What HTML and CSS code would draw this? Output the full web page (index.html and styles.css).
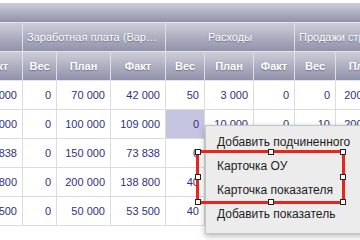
FILE: index.html
```html
<!DOCTYPE html>
<html>
<head>
<meta charset="utf-8">
<link rel="stylesheet" href="styles.css">
</head>
<body>
<div class="viewport">
  <table class="grid">
    <colgroup>
      <col class="w55"><col class="w34"><col class="w54"><col class="w55"><col class="w39"><col class="w49"><col class="w41"><col class="w41"><col class="w54">
    </colgroup>
    <thead>
      <tr class="h-top"><th colspan="9"></th></tr>
      <tr class="h-group">
        <th></th>
        <th colspan="3" class="trunc">Заработная плата (Вариант)</th>
        <th colspan="3">Расходы</th>
        <th colspan="2" class="left">Продажи стр</th>
      </tr>
      <tr class="h-sub">
        <th>Факт</th><th>Вес</th><th>План</th><th>Факт</th><th>Вес</th><th>План</th><th>Факт</th><th>Вес</th><th>План</th>
      </tr>
    </thead>
    <tbody>
      <tr><td>42 000</td><td>0</td><td>70 000</td><td>42 000</td><td>50</td><td>3 000</td><td>0</td><td>0</td><td>200 000</td></tr>
      <tr><td>109 000</td><td>0</td><td>100 000</td><td>109 000</td><td class="sel">0</td><td>10 000</td><td>0</td><td>10</td><td>200 000</td></tr>
      <tr><td>73 838</td><td>0</td><td>150 000</td><td>73 838</td><td>0</td><td>5 000</td><td>0</td><td>0</td><td>150 000</td></tr>
      <tr><td>138 800</td><td>0</td><td>200 000</td><td>138 800</td><td>40</td><td>8 000</td><td>0</td><td>0</td><td>100 000</td></tr>
      <tr><td>53 500</td><td>0</td><td>50 000</td><td>53 500</td><td>40</td><td>2 000</td><td>0</td><td>0</td><td>50 000</td></tr>
    </tbody>
  </table>

  <div class="menu">
    <div class="item">Добавить подчиненного</div>
    <div class="item">Карточка ОУ</div>
    <div class="item">Карточка показателя</div>
    <div class="item">Добавить показатель</div>
  </div>

  <div class="mark">
    <span class="hd tl"></span><span class="hd tm"></span><span class="hd tr"></span>
    <span class="hd ml"></span><span class="hd mr"></span>
    <span class="hd bl"></span><span class="hd bm"></span><span class="hd br"></span>
  </div>
</div>
</body>
</html>
```
FILE: styles.css
```css
html, body {
  margin: 0;
  padding: 0;
  background: #ffffff;
}
.viewport {
  position: relative;
  width: 360px;
  height: 240px;
  overflow: hidden;
  padding-top: 3px;
  box-sizing: border-box;
  background: #ffffff;
  font-family: "Liberation Sans", Arial, sans-serif;
}
.grid {
  table-layout: fixed;
  border-collapse: separate;
  border-spacing: 0;
  width: 422px;
  margin-left: -32px;
}
.w55 { width: 55px; }
.w34 { width: 34px; }
.w54 { width: 54px; }
.w39 { width: 39px; }
.w49 { width: 49px; }
.w41 { width: 41px; }

.grid th {
  color: #ffffff;
  font-size: 11px;
  font-weight: normal;
  text-shadow: 0 1px 1px rgba(70, 70, 100, 0.55);
  background: linear-gradient(#cdcdd9, #9191aa);
  border-right: 1px solid #dedee8;
  border-bottom: 1px solid #e4e4ec;
  padding: 0 4px;
  white-space: nowrap;
  overflow: hidden;
  text-align: center;
}
.h-top th { height: 19px; padding: 0; }
.h-group th { height: 28px; }
.h-group th.trunc { text-overflow: ellipsis; }
.h-group th.left { text-align: left; }
.h-sub th { height: 28px; font-weight: bold; }

.grid td {
  height: 27px;
  padding: 0 5px 1px 0;
  text-align: right;
  font-size: 11px;
  color: #31317e;
  border-right: 1px solid #dcdcdc;
  border-bottom: 1px solid #dcdcdc;
  white-space: nowrap;
  overflow: hidden;
}
.grid td.sel { background: #c5c5e1; }

.menu {
  position: absolute;
  left: 205px;
  top: 125px;
  width: 170px;
  padding: 4px 0 7px;
  background: #ececec;
  border: 1px solid #c4c4c4;
  box-shadow: 0 2px 6px rgba(0, 0, 0, 0.3);
}
.item {
  height: 24px;
  line-height: 24px;
  padding-left: 11px;
  font-size: 12px;
  color: #1c1c1c;
  white-space: nowrap;
}

.mark {
  position: absolute;
  left: 196px;
  top: 150px;
  width: 143px;
  height: 48px;
  border: 3px solid #e8241b;
}
.hd {
  position: absolute;
  width: 4px;
  height: 4px;
  background: #ffffff;
  border: 1px solid #222222;
}
.tl { left: -4px; top: -4px; }
.tm { left: 69px; top: -4px; }
.tr { right: -4px; top: -4px; }
.ml { left: -4px; top: 21px; }
.mr { right: -4px; top: 21px; }
.bl { left: -4px; bottom: -4px; }
.bm { left: 69px; bottom: -4px; }
.br { right: -4px; bottom: -4px; }
```
